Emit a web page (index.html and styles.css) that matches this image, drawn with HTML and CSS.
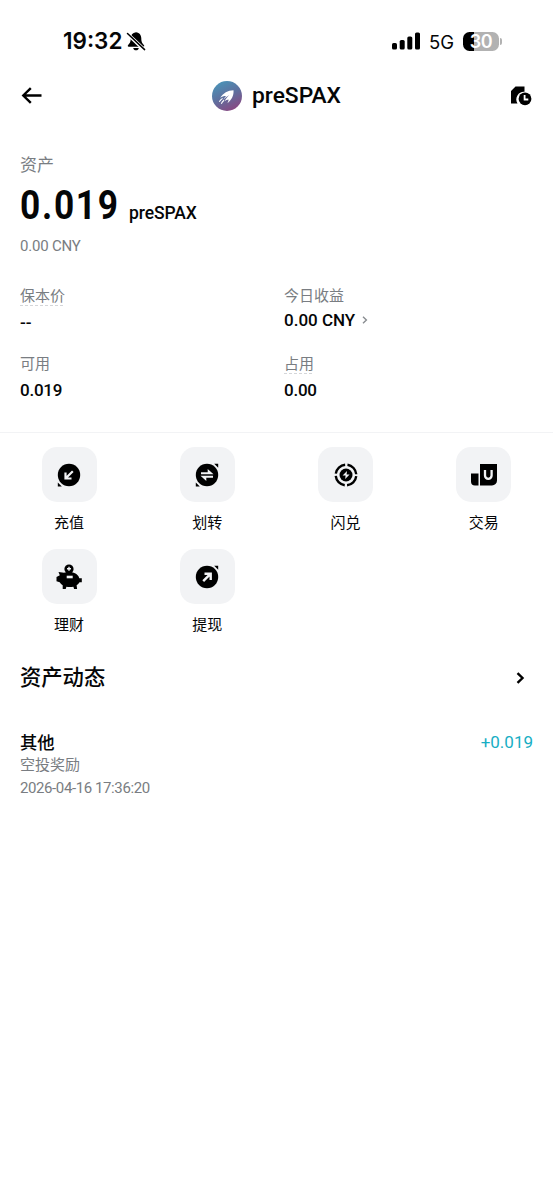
FILE: index.html
```html
<!DOCTYPE html>
<html lang="zh-CN">
<head>
<meta charset="utf-8">
<title>preSPAX</title>
<link rel="stylesheet" href="styles.css">
</head>
<body>
<div class="status">
  <div class="status-left">
    <span class="time">19:32</span>
    <svg class="bell" width="20" height="21" viewBox="0 0 20 21"><path d="M10 1.200c-3.600.5-5.300 3-5.300 6.300 0 3.800-1.200 5-2.700 6.700-.5.700-.2 1.500.7 1.500h14.600c.9 0 1.200-.8.7-1.500-1.500-1.700-2.700-2.900-2.700-6.700 0-3.300-1.700-5.800-5.300-6.300z"/><path d="M7.200 17h5.600c-.3 1.500-1.300 2.300-2.800 2.300s-2.500-.8-2.800-2.300z"/><path d="M1.300 2.800 18.400 18.900" stroke="#fff" stroke-width="3.600"/><path d="M1.500 2.500 18.600 18.600" stroke="#000" stroke-width="1.500" stroke-linecap="round"/></svg>
  </div>
  <div class="status-right">
    <svg width="28" height="18" viewBox="0 0 28 18"><rect x="0" y="11" width="5" height="6.500" rx="1.600"/><rect x="7.700" y="8" width="5" height="9.500" rx="1.600"/><rect x="15.300" y="4.500" width="5" height="13" rx="1.600"/><rect x="23" y="0.500" width="5" height="17" rx="1.600"/></svg>
    <span class="net">5G</span>
    <span class="battery"><span class="cell">30</span><span class="nub"></span></span>
  </div>
</div>

<header class="nav">
  <svg width="22" height="20" viewBox="0 0 22 20" fill="none" stroke="#000" stroke-width="2.400"><path d="M20.500 9.500H2.500M9.800 2.200 2.300 9.500l7.500 7.300"/></svg>
  <div class="coin">
    <svg width="30" height="30" viewBox="0 0 30 30"><defs><linearGradient id="g" x1=".25" y1="0" x2=".75" y2="1"><stop offset="0" stop-color="#4a94b8"/><stop offset=".5" stop-color="#5f6f9e"/><stop offset="1" stop-color="#8c4580"/></linearGradient></defs><circle cx="15" cy="15" r="15" fill="url(#g)"/><path d="M21.500 9.200c-5.500.2-10.500 2.800-13.300 7.600 2-1.500 3.800-2 5.800-1.900-.9 1.200-1.900 2.400-2.700 3.800 2.200-2 4-3.600 6-4.700-2 2.100-3.500 4-4.800 6.200 1.500-1.100 2.700-1.700 4.100-1.800 0 1.200-.4 2.500-1.200 3.800 4.200-3.200 6.600-8 6.100-13z" fill="#fff"/><path d="M7.300 20.800c1-1.700 2-2.600 3.300-3.400M9.300 22.700c.7-1.500 1.600-2.500 2.700-3.400" stroke="#fff" stroke-width="1.100" fill="none"/></svg>
    <span class="coin-name">preSPAX</span>
  </div>
  <svg width="22" height="20" viewBox="0 0 22 20"><path d="M5.500.5H14.500v5.300a7.600 7.600 0 0 0-7 11.600H1V5z"/><circle cx="15" cy="12.800" r="6.400"/><path d="M14.600 9v4.500h3.700" fill="none" stroke="#fff" stroke-width="1.800"/></svg>
</header>

<main>
  <section class="summary">
    <div class="asset-label">资产</div>
    <div class="balance"><span class="amount">0.019</span><span class="unit">preSPAX</span></div>
    <div class="fiat">0.00 CNY</div>
    <div class="stats">
      <div class="stat"><span class="label dashed">保本价</span><span class="value none">--</span></div>
      <div class="stat"><span class="label">今日收益</span><span class="value pnl">0.00 CNY<svg width="6" height="8" viewBox="0 0 6 8" fill="none" stroke="#888c90" stroke-width="1.400"><path d="M1 .7 4.400 4 1 7.300"/></svg></span></div>
      <div class="stat"><span class="label">可用</span><span class="value num">0.019</span></div>
      <div class="stat"><span class="label dashed">占用</span><span class="value num">0.00</span></div>
    </div>
  </section>

  <nav class="actions">
    <div class="action"><span class="tile"><svg width="26" height="26" viewBox="0 0 26 26"><circle cx="13" cy="13" r="11.200"/><path d="M1.800 20.500v4h4z"/><path d="M16.800 9.200 10 16M9.500 10.500v6h6" fill="none" stroke="#f2f3f5" stroke-width="2.200"/></svg></span><span>充值</span></div>
    <div class="action"><span class="tile"><svg width="26" height="26" viewBox="0 0 26 26"><circle cx="13" cy="13" r="11.200"/><path d="M1.800 20.500v4h4zM20.200 1.800h4v4z"/><path d="M7 10.200h6.700V7l5.800 5.200H7zM19 13.800H6.500l5.800 5.200v-3.200H19z" fill="#f2f3f5"/></svg></span><span>划转</span></div>
    <div class="action"><span class="tile"><svg width="26" height="26" viewBox="0 0 26 26"><circle cx="13" cy="13" r="10.300" fill="none" stroke="#000" stroke-width="2.400" stroke-dasharray="13.780 2.400" stroke-dashoffset="-1.200"/><circle cx="13" cy="13" r="6.500"/><path d="m14 9-4.400 4.600h3l-.4 3.400 4.400-4.600h-3z" fill="#f2f3f5"/></svg></span><span>闪兑</span></div>
    <div class="action"><span class="tile"><svg width="26" height="26" viewBox="0 0 26 26"><path d="M9 2h17v16.500a5 5 0 0 1-5 5H9zM0 11.500h7.500v12H4a4 4 0 0 1-4-4z"/><path d="M14 8v5.500a3.300 3.300 0 0 0 6.600 0V8" fill="none" stroke="#f2f3f5" stroke-width="2.300"/></svg></span><span>交易</span></div>
    <div class="action"><span class="tile"><svg width="26" height="26" viewBox="0 0 26 26"><circle cx="13" cy="5" r="4.600"/><path d="M13 2.800v4M11 4.800h4" stroke="#f2f3f5" stroke-width="1.400"/><path d="M2.500 8 8 8.700c4-1.400 11.500-1.200 14.500 3.600l.8 1.900h2.500v4h-2.300a10 10 0 0 1-2.900 3.100l.5 3.700h-3l-.7-2.300c-2.500.5-5 .5-7 0L9.700 25H6.700v-3.700c-1.300-.8-2.200-1.700-3-3L.5 17.300v-4.200l3.300-1.800z"/><path d="M10.700 11.700h6v2.600h-6z" fill="#f2f3f5"/></svg></span><span>理财</span></div>
    <div class="action"><span class="tile"><svg width="26" height="26" viewBox="0 0 26 26"><circle cx="13" cy="13" r="11.200"/><path d="M20.200 1.800h4v4z"/><path d="m9.200 17.200 7-7M10.500 9.700h6.200v6.200" fill="none" stroke="#f2f3f5" stroke-width="2.400"/></svg></span><span>提现</span></div>
  </nav>

  <section class="activity">
    <div class="activity-head"><h2>资产动态</h2><svg width="9" height="12" viewBox="0 0 9 12" fill="none" stroke="#000" stroke-width="2.400"><path d="M1.500 1.200 6.500 6l-5 4.800"/></svg></div>
    <div class="entry">
      <div class="entry-row"><span class="kind">其他</span><span class="delta">+0.019</span></div>
      <div class="note">空投奖励</div>
      <div class="date">2026-04-16 17:36:20</div>
    </div>
  </section>
</main>
</body>
</html>
```
FILE: styles.css
```css
* { box-sizing: border-box; }
body {
  margin: 0;
  height: 1200px;
  overflow: hidden;
  background: #fff;
  color: #050607;
  font-family: Roboto, "Noto Sans CJK SC", sans-serif;
}
svg { display: block; flex: none; }
.status {
  display: flex;
  justify-content: space-between;
  align-items: center;
  height: 66px;
  padding: 16px 51px 0 63px;
}
.status-left, .status-right { display: flex; align-items: center; }
.status-left { gap: 4px; }
.time { font: 600 22.500px/30px Inter, sans-serif; letter-spacing: 0; }
.net { margin-left: 9px; padding-top: 1px; font: 400 18.500px/24px Inter, sans-serif; }
.battery { display: flex; align-items: center; gap: 1px; margin-left: 9px; }
.cell {
  width: 36px;
  height: 19px;
  border-radius: 6.500px;
  background: linear-gradient(90deg, #000 11px, #b2b2b2 11px);
  color: #fff;
  font: 600 18px/19px Inter, sans-serif;
  letter-spacing: -0.5px;
  text-align: center;
}
.nub { width: 2px; height: 7px; border-radius: 0 2px 2px 0; background: #b2b2b2; }
.nav {
  display: flex;
  justify-content: space-between;
  align-items: center;
  height: 59px;
  padding: 0 21px;
}
.coin { display: flex; align-items: center; gap: 10px; }
.coin-name { font-size: 22.800px; line-height: 30px; font-weight: 500; }
.summary { height: 308px; padding: 29px 20px 0; border-bottom: 1px solid #f2f3f5; }
.asset-label { font-size: 17px; line-height: 22px; color: #797d82; }
.balance { display: flex; align-items: baseline; gap: 12px; height: 58px; line-height: 58px; }
.amount {
  width: 97px;
  font-size: 41px;
  font-weight: 700;
  letter-spacing: 2px;
  transform: scaleX(0.86);
  transform-origin: left;
}
.unit { font-size: 17.500px; font-weight: 500; letter-spacing: -0.100px; }
.fiat { font-size: 15px; line-height: 24px; letter-spacing: -0.200px; color: #797d82; }
.stats { display: grid; grid-template-columns: 264px 1fr; grid-template-rows: 68px 68px; padding-top: 28px; }
.stat { display: flex; flex-direction: column; align-items: flex-start; }
.label { height: 20px; font-size: 15px; line-height: 20px; color: #797d82; }
.dashed {
  background: repeating-linear-gradient(90deg, #d4d6d9 0 3px, transparent 3px 5px) left bottom / 100% 1px no-repeat;
}
.value { margin-top: 6px; font-size: 17px; line-height: 20px; font-weight: 500; }
.num { letter-spacing: -0.250px; }
.pnl { display: flex; align-items: center; gap: 7px; margin-top: 4px; }
.actions { display: grid; grid-template-columns: repeat(4, 1fr); grid-auto-rows: 102px; padding-top: 14px; }
.action { display: flex; flex-direction: column; align-items: center; gap: 10px; font-size: 15px; line-height: 22px; }
.tile { display: grid; place-items: center; width: 55px; height: 55px; border-radius: 15px; background: #f2f3f5; }
.activity { padding: 9px 20px 0; }
.activity-head { display: flex; align-items: center; justify-content: space-between; height: 36px; padding-right: 8px; }
h2 { margin: 0; font-size: 21.300px; line-height: 30px; font-weight: 500; }
.entry { padding-top: 33px; }
.entry-row { display: flex; justify-content: space-between; align-items: center; height: 25px; }
.kind { font-size: 17.300px; font-weight: 500; }
.delta { font-size: 17px; color: #17aec4; }
.note, .date { font-size: 15px; line-height: 23px; color: #797d82; }
.date { letter-spacing: -0.400px; }
```
